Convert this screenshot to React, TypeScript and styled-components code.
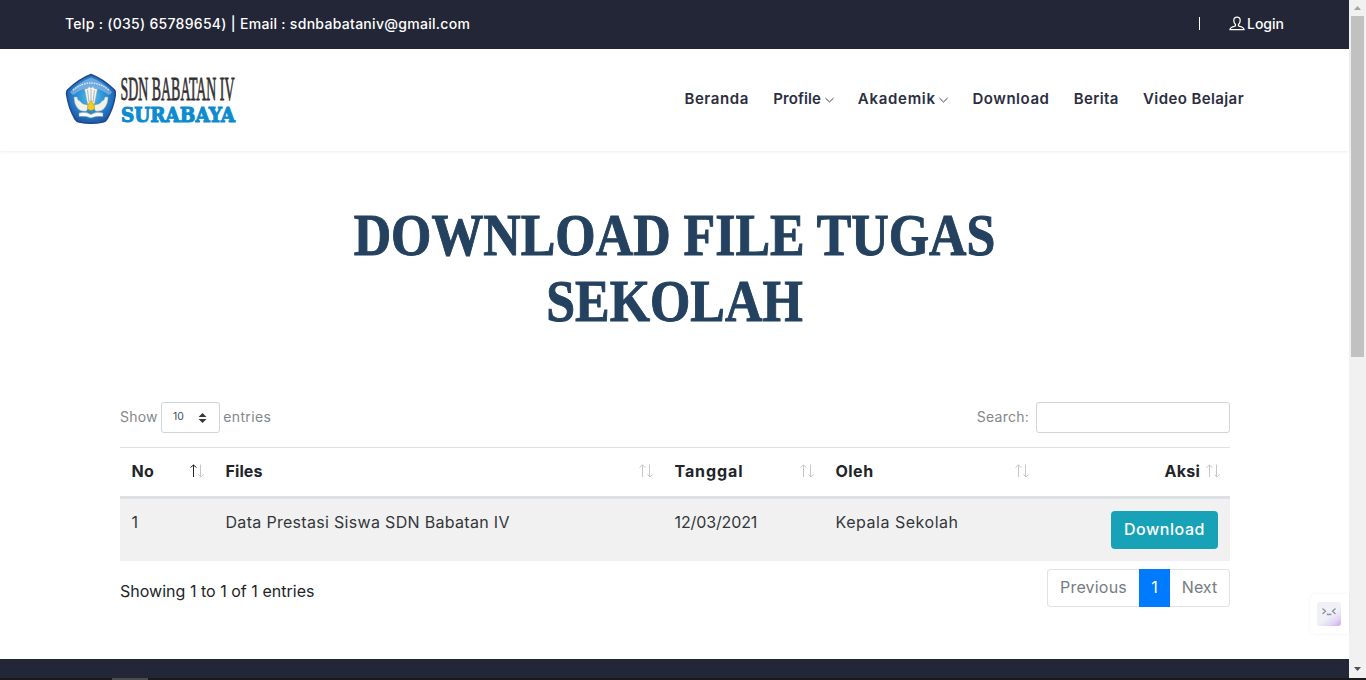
import React from "react";
import styled, { createGlobalStyle } from "styled-components";

const navy = "#232637";

const Global = createGlobalStyle`
  *, *::before, *::after { box-sizing: border-box; }
  body {
    margin: 0;
    background: #fff;
    color: #212529;
    font-family: Inter, "Liberation Sans", sans-serif;
    font-size: 16px;
    overflow: hidden;
  }
`;

const Screen = styled.div`
  display: flex;
  flex-direction: column;
  height: 680px;
`;

const Viewport = styled.div`
  display: flex;
  flex: 1;
  min-height: 0;
`;

const Page = styled.div`
  position: relative;
  display: flex;
  flex-direction: column;
  flex: 1;
`;

const Label = styled.span<{ $track?: number }>`
  white-space: pre;
  letter-spacing: ${(p) => p.$track ?? 0}px;
`;

const TopBar = styled.div`
  display: flex;
  align-items: center;
  height: 49px;
  padding: 0 65px 2px;
  background: ${navy};
  color: #fff;
  font-size: 14px;
  font-weight: 500;
`;

const Divider = styled.span`
  width: 1px;
  height: 13px;
  margin-left: auto;
  margin-right: 29px;
  background: #fff;
`;

const Login = styled.a`
  display: flex;
  align-items: center;
  gap: 2px;
`;

const Header = styled.header`
  display: flex;
  align-items: center;
  justify-content: space-between;
  height: 102px;
  padding: 0 105px 2px 65px;
  box-shadow: 0 1px 3px rgba(0, 0, 0, 0.07);
`;

const Nav = styled.nav`
  display: flex;
  align-items: center;
  gap: 24.2px;
  padding-bottom: 2px;
  color: #2b2e3f;
  font-size: 15px;
  font-weight: 600;
`;

const NavItem = styled.a`
  display: flex;
  align-items: center;
  gap: 3.5px;

  svg {
    margin-top: 3px;
  }
`;

const Title = styled.h1`
  margin: 51px 0 0;
  color: #24425f;
  font: 700 59px/66px "Liberation Serif", serif;
  text-align: center;
  -webkit-text-stroke: 1px #24425f;
`;

const TitleLine = styled.span`
  display: block;
  white-space: pre;
  transform: scaleX(0.879);
`;

const Panel = styled.section`
  width: 1110px;
  margin: 68px 0 0 120px;
`;

const Controls = styled.div`
  display: flex;
  justify-content: space-between;
  height: 45px;
  color: #84888b;
  font-size: 14px;
`;

const Control = styled.label<{ $gap: number }>`
  display: flex;
  align-items: center;
  gap: ${(p) => p.$gap}px;
  height: 31px;
`;

const ControlText = styled(Label)<{ $lift: number }>`
  padding-bottom: ${(p) => p.$lift}px;
`;

const LengthSelect = styled.span`
  display: flex;
  align-items: center;
  justify-content: space-between;
  width: 59px;
  height: 31px;
  padding: 0 11px 2px;
  border: 1px solid #ced4da;
  border-radius: 3px;
  color: #495057;
  font-size: 10.5px;

  svg {
    margin-top: 2px;
  }
`;

const SearchInput = styled.input`
  width: 194px;
  height: 31px;
  border: 1px solid #ced4da;
  border-radius: 3px;
  background: #fff;
`;

const Row = styled.div`
  display: grid;
  grid-template-columns: 94px 449px 161px 215px 191px;
`;

const HeadRow = styled(Row)`
  height: 52px;
  border-top: 1px solid #dee2e6;
  border-bottom: 3px solid #dcdfe4;
  font-weight: 700;
`;

const BodyRow = styled(Row)`
  height: 62px;
  background: #f1f1f1;
  color: #33373b;
`;

const HeadCell = styled.div<{ $end?: boolean }>`
  display: flex;
  align-items: center;
  justify-content: ${(p) => (p.$end ? "flex-end" : "space-between")};
  gap: 5px;
  padding: 0 10px 2px 11.5px;
`;

const Cell = styled.div`
  padding: 11px 12px 12px 11.5px;
  line-height: 24px;
`;

const ActionCell = styled.div`
  display: flex;
  justify-content: flex-end;
  align-items: flex-start;
  padding: 12px;
`;

const DownloadButton = styled.button`
  width: 107px;
  height: 38px;
  padding: 0 0 2px;
  border: 0;
  border-radius: 4px;
  background: #18a2b8;
  color: #fff;
  font: 500 16px Inter, sans-serif;
`;

const TableFooter = styled.div`
  display: flex;
  justify-content: space-between;
  padding-top: 8px;
  line-height: 24px;
`;

const Summary = styled.div`
  padding-top: 10px;
`;

const Pagination = styled.div`
  display: flex;
  height: 38px;
  color: #757c84;
`;

const PageLink = styled.a<{ $w: number; $active?: boolean; $side?: "left" | "right" }>`
  display: flex;
  align-items: center;
  justify-content: center;
  width: ${(p) => p.$w}px;
  padding-bottom: 2px;
  border: 1px solid ${(p) => (p.$active ? "#007bff" : "#dee2e6")};
  border-left-width: ${(p) => (p.$side === "right" ? 0 : 1)}px;
  border-right-width: ${(p) => (p.$side === "left" ? 0 : 1)}px;
  border-radius: ${(p) => (p.$side === "left" ? "4px 0 0 4px" : p.$side === "right" ? "0 4px 4px 0" : 0)};
  background: ${(p) => (p.$active ? "#007bff" : "#fff")};
  color: ${(p) => (p.$active ? "#fff" : "inherit")};
`;

const SiteFooter = styled.footer`
  height: 19px;
  margin-top: auto;
  background: ${navy};
`;

const Assistant = styled.div`
  position: absolute;
  right: 0;
  bottom: 44px;
  display: flex;
  align-items: center;
  width: 39px;
  height: 40px;
  padding-left: 7px;
  border-radius: 6px 0 0 6px;
  background: #fff;
  box-shadow: 0 0 3px rgba(0, 0, 0, 0.07);
`;

const AssistantFace = styled.div`
  width: 24px;
  height: 24px;
  border-radius: 3px;
  background: linear-gradient(145deg, #eff1f7 55%, #e3d6f4 78%, #cba6ec);
`;

const ScrollBar = styled.div`
  display: flex;
  flex-direction: column;
  align-items: center;
  justify-content: space-between;
  width: 17px;
  background: #f1f1f1;
`;

const ScrollThumb = styled.div`
  width: 13px;
  height: 341px;
  margin-bottom: auto;
  background: #c1c1c1;
`;

const ScrollArrow = styled.svg`
  display: block;
  width: 17px;
  height: 16px;
`;

const TaskStrip = styled.div`
  height: 2px;
  padding-left: 112px;
  background: #1b191e;
`;

const TaskMark = styled.div`
  width: 36px;
  height: 2px;
  background: #4c4b50;
`;

const Brand = styled.div`
  display: flex;
  gap: 4px;
  height: 54px;
`;

const Wordmark = styled.svg`
  display: block;
  overflow: visible;
`;

const UserIcon = () => (
  <svg width="16" height="16" viewBox="0 0 16 16" fill="none" stroke="#fff" strokeWidth="1.25" strokeLinejoin="round">
    <path d="M8 1.1C5.9 1.1 4.8 2.4 4.8 4.5c0 1.8.6 3 1.7 3.9v1.3c-.8.7-2.2.9-3.7 1.6-1.2.6-1.7 1.1-1.9 2.4h14.2c-.2-1.3-.7-1.8-1.9-2.4-1.5-.7-2.9-.9-3.7-1.6V8.4c1.1-.9 1.7-2.1 1.7-3.9 0-2.1-1.1-3.4-3.2-3.4z" />
  </svg>
);

const Chevron = () => (
  <svg width="9" height="6" viewBox="0 0 9 6" fill="none" stroke="#2b2e3f" strokeWidth="0.9">
    <path d="M0.4 1l4.1 4 4.1-4" />
  </svg>
);

const SortIcon = ({ active }: { active?: boolean }) => (
  <svg width="15" height="14" viewBox="0 0 15 14" fill="none" stroke="#c4c6c9" strokeWidth="1">
    <path d="M1.5 3.5L4.5 1l3 2.5M4.5 1v12" stroke={active ? "#212529" : "#c4c6c9"} />
    <path d="M9.5 10.5l2.5 2.5 2.5-2.5M11.5 0.5v12" />
  </svg>
);

const SelectArrows = () => (
  <svg width="10" height="10" viewBox="0 0 10 10" fill="#343a40">
    <path d="M0.5 4l4-4 4 4zM0.5 6h8l-4 4z" />
  </svg>
);

const Emblem = () => (
  <svg width="51" height="54" viewBox="0 0 51 54">
    <defs>
      <radialGradient id="shield" cx="50%" cy="45%" r="60%">
        <stop offset="0" stopColor="#4fc3ee" />
        <stop offset="0.55" stopColor="#2687cf" />
        <stop offset="1" stopColor="#1a4f9f" />
      </radialGradient>
    </defs>
    <path d="M26 2.5Q38 7 49.5 18q1.3 2 .8 5Q48.5 36 42 47q-1.5 2.5-4 3-12 2.5-24 0-2.5-.5-4-3Q3.5 36 1.7 23q-.5-3 .8-5Q14 7 26 2.5z" fill="url(#shield)" stroke="#21498f" strokeWidth="1.5" />
    <path d="M26 5.5Q38 10 47 20 44 25 41 21 34 16 26 16T11 21Q8 25 5 20 14 10 26 5.5z" fill="#8fb7e4" opacity="0.7" />
    <path d="M8 18Q26 4 44 18" fill="none" stroke="#e4effa" strokeWidth="1.3" strokeDasharray="1.5 1" />
    <path d="M19.5 17l3 15h7l3-15-3-.5-1.5-2-2 1.5-2-1.5-1.5 2z" fill="#f3f4ef" stroke="#8b9cab" strokeWidth="0.5" />
    <path d="M22.5 18l1.5 12M26 17v12M29.5 18l-1.5 12" stroke="#8da0af" strokeWidth="0.7" />
    <path d="M9 25q0 7 3.5 11 3 4 9 3l3-6Q17 33 15 29l-2-1-1-3zM43 25q0 7-3.5 11-3 4-9 3l-3-6Q35 33 37 29l2-1 1-3z" fill="#f2f2e9" stroke="#9aa9ad" strokeWidth="0.5" />
    <path d="M14 41q7-2 12 1.5Q31 39 38 41v3.5q-7-1-12 1.5-5-2.5-12-1.5z" fill="#fff" stroke="#8799a5" strokeWidth="0.5" />
    <path d="M26 28.5q-4.5 5-3.5 8 3.5 4 7 0 1-3-3.5-8z" fill="#f2cc20" stroke="#a48a28" strokeWidth="0.5" />
  </svg>
);

const Logo = () => (
  <Brand>
    <Emblem />
    <Wordmark width="116" height="54" viewBox="0 0 116 54">
      <text x="0.5" y="27.5" textLength="114" lengthAdjust="spacingAndGlyphs" fontFamily="Liberation Serif, serif" fontSize="33" fill="#342f31" stroke="#342f31" strokeWidth="0.8">SDN BABATAN IV</text>
      <text x="1" y="50" textLength="114" lengthAdjust="spacingAndGlyphs" fontFamily="DejaVu Serif, serif" fontWeight="700" fontSize="20.5" fill="#0c8bd0" stroke="#0c8bd0" strokeWidth="1.1">SURABAYA</text>
    </Wordmark>
  </Brand>
);

const navItems: { text: string; track: number; menu?: boolean }[] = [
  { text: "Beranda", track: 0.6 },
  { text: "Profile", track: 0.13, menu: true },
  { text: "Akademik", track: 0.71, menu: true },
  { text: "Download", track: 0.54 },
  { text: "Berita", track: 0.4 },
  { text: "Video Belajar", track: 0.4 },
];

const columns = [
  { text: "No", track: 0.25 },
  { text: "Files", track: 0.1 },
  { text: "Tanggal", track: 0.9 },
  { text: "Oleh", track: 0.48 },
  { text: "Aksi", track: 0.22 },
];

export default function App() {
  return (
    <Screen>
      <Global />
      <Viewport>
        <Page>
          <TopBar>
            <Label $track={0.29}>Telp : (035) 65789654) | Email : sdnbabataniv@gmail.com</Label>
            <Divider />
            <Login>
              <UserIcon />
              <Label>Login</Label>
            </Login>
          </TopBar>

          <Header>
            <Logo />
            <Nav>
              {navItems.map((item) => (
                <NavItem key={item.text}>
                  <Label $track={item.track}>{item.text}</Label>
                  {item.menu && <Chevron />}
                </NavItem>
              ))}
            </Nav>
          </Header>

          <Title>
            <TitleLine>DOWNLOAD FILE TUGAS</TitleLine>
            <TitleLine>SEKOLAH</TitleLine>
          </Title>

          <Panel>
            <Controls>
              <Control $gap={3.3}>
                <ControlText $track={0.2} $lift={3}>Show</ControlText>
                <LengthSelect>
                  <Label>10</Label>
                  <SelectArrows />
                </LengthSelect>
                <ControlText $track={0.35} $lift={3}>entries</ControlText>
              </Control>
              <Control $gap={7}>
                <ControlText $track={0.25} $lift={2}>Search:</ControlText>
                <SearchInput aria-label="Search" />
              </Control>
            </Controls>

            <HeadRow>
              {columns.map((column, i) => (
                <HeadCell key={column.text} $end={i === 4}>
                  <Label $track={column.track}>{column.text}</Label>
                  <SortIcon active={i === 0} />
                </HeadCell>
              ))}
            </HeadRow>
            <BodyRow>
              <Cell>1</Cell>
              <Cell><Label $track={0.31}>Data Prestasi Siswa SDN Babatan IV</Label></Cell>
              <Cell><Label $track={-0.12}>12/03/2021</Label></Cell>
              <Cell><Label $track={0.53}>Kepala Sekolah</Label></Cell>
              <ActionCell>
                <DownloadButton><Label $track={0.54}>Download</Label></DownloadButton>
              </ActionCell>
            </BodyRow>

            <TableFooter>
              <Summary><Label $track={0.02}>Showing 1 to 1 of 1 entries</Label></Summary>
              <Pagination>
                <PageLink $w={92} $side="left"><Label $track={0.2}>Previous</Label></PageLink>
                <PageLink $w={31} $active>1</PageLink>
                <PageLink $w={60} $side="right"><Label>Next</Label></PageLink>
              </Pagination>
            </TableFooter>
          </Panel>

          <SiteFooter />
          <Assistant>
            <AssistantFace>
              <svg width="24" height="24" viewBox="0 0 24 24" fill="none" stroke="#8f9399" strokeWidth="1.3">
                <path d="M5.5 6.5l3 2.7-3 2.7M18.5 6.5l-3 2.7 3 2.7M10.5 11.5v1h3.2v-1" />
              </svg>
            </AssistantFace>
          </Assistant>
        </Page>

        <ScrollBar>
          <ScrollArrow viewBox="0 0 17 16"><path d="M5 10l3.5-4 3.5 4z" fill="#a3a3a3" /></ScrollArrow>
          <ScrollThumb />
          <ScrollArrow viewBox="0 0 17 16"><path d="M5 5l3.5 4L12 5z" fill="#505050" /></ScrollArrow>
        </ScrollBar>
      </Viewport>
      <TaskStrip><TaskMark /></TaskStrip>
    </Screen>
  );
}
